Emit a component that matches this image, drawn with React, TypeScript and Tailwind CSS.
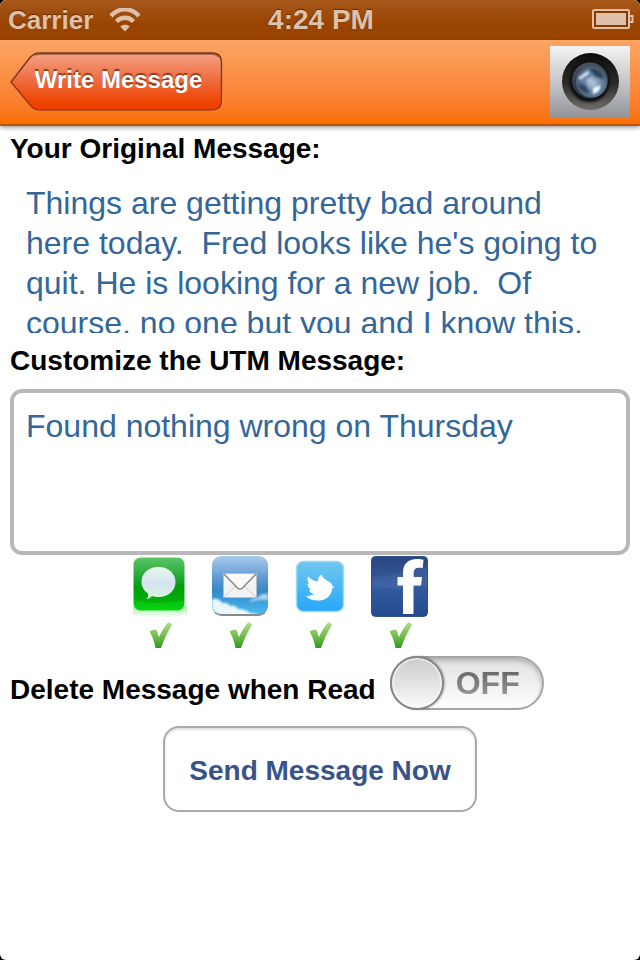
import { useState } from "react";
import type { ReactNode } from "react";

function StatusBar() {
  return (
    <div className="grid h-10 grid-cols-3 items-center bg-linear-to-b from-[#a7581a] via-[#994400] via-60% to-[#994400] pr-1.5 pl-2 text-[26px] leading-10 font-bold text-[#dfc0a8] [text-shadow:0_-1px_1px_#5c2900]">
      <div className="flex items-center gap-4">
        <span>Carrier</span>
        <svg width="32" height="24" viewBox="0 0 32 24" role="img" aria-label="Wi-Fi" fill="none" stroke="#dfc0a8">
          <path d="M2 8C10-.8 22-.8 30 8" strokeWidth="4.400" />
          <path d="M7.500 13.500c5-5 12-5 17 0" strokeWidth="4.400" />
          <path d="M16 23.500l-4.800-5c2.800-2.500 6.800-2.500 9.600 0z" fill="#dfc0a8" stroke="none" />
        </svg>
      </div>
      <span className="text-center text-[28px]">4:24 PM</span>
      <svg className="justify-self-end" width="42" height="22" viewBox="0 0 42 22" role="img" aria-label="Battery full">
        <rect x="1" y="1" width="36" height="18" rx="1.500" fill="#843900" stroke="#dfc0a8" strokeWidth="2" />
        <rect x="4" y="4" width="30" height="12" fill="#dfc0a8" />
        <path d="M38 7h2.500v6H38" fill="none" stroke="#dfc0a8" strokeWidth="2" />
      </svg>
    </div>
  );
}

function CameraIcon() {
  return (
    <svg className="block h-[72px] w-20" viewBox="0 0 80 72" aria-hidden="true">
      <defs>
        <linearGradient id="camPlate" x2="0" y2="1">
          <stop stopColor="#f4f4f4" />
          <stop offset=".5" stopColor="#c6c6ca" />
          <stop offset="1" stopColor="#909399" />
        </linearGradient>
        <linearGradient id="camRing" x2="0" y2="1">
          <stop stopColor="#0c0c0c" />
          <stop offset=".55" stopColor="#2e2c2b" />
          <stop offset="1" stopColor="#706d6a" />
        </linearGradient>
        <linearGradient id="camInner" x2="0" y2="1">
          <stop stopColor="#4b535d" />
          <stop offset="1" stopColor="#25303e" />
        </linearGradient>
        <radialGradient id="camGlass" cx=".55" cy=".55">
          <stop stopColor="#a8bfd6" />
          <stop offset=".5" stopColor="#6d89a7" />
          <stop offset="1" stopColor="#4a6480" />
        </radialGradient>
        <filter id="camSoft" x="-.3" y="-.3" width="1.600" height="1.600">
          <feGaussianBlur stdDeviation="1" />
        </filter>
      </defs>
      <rect width="80" height="72" fill="url(#camPlate)" />
      <circle cx="40.500" cy="35.500" r="28.500" fill="url(#camRing)" />
      <circle cx="39.500" cy="36" r="20" fill="#0b0d10" filter="url(#camSoft)" />
      <circle cx="40" cy="34.500" r="18" fill="url(#camInner)" />
      <circle cx="41.500" cy="36" r="15.500" fill="url(#camGlass)" />
      <g filter="url(#camSoft)">
        <path d="M40 23c8-1 13 4 14 10l-9-3z" fill="#2c4058" />
        <path d="M28 38l7 1 5 8c-7 0-11-3-12-9z" fill="#33475e" />
        <path d="M28 32l10-8 1 4-9 6z" fill="#cfe2f2" />
        <path d="M43 42l7-3c1 4-2 8-7 9z" fill="#f0f8ff" />
        <path d="M36 34l6-3 4 6-6 3z" fill="#a5bdd5" />
      </g>
    </svg>
  );
}

function NavBar() {
  return (
    <header className="relative flex h-[86px] items-center justify-between border-b-2 border-[#b9560b] bg-linear-to-b from-[#fca563] to-[#f97000] px-2.5 shadow-[0_2px_4px_rgba(0,0,0,0.35)]">
      <button type="button" className="relative h-[60px] w-[213px] pb-1 pl-1 text-2xl font-bold text-white [text-shadow:0_-2px_1px_rgba(90,25,0,0.65)]">
        <svg className="absolute inset-0" width="213" height="60" viewBox="0 0 213 60" aria-hidden="true">
          <defs>
            <linearGradient id="backFill" x2="0" y2="1">
              <stop stopColor="#f6a184" />
              <stop offset=".5" stopColor="#ee6a3c" />
              <stop offset=".85" stopColor="#ee4503" />
              <stop offset="1" stopColor="#f03e00" />
            </linearGradient>
            <linearGradient id="backEdge" x2="0" y2="1">
              <stop stopColor="#6e3a22" />
              <stop offset="1" stopColor="#a83308" />
            </linearGradient>
          </defs>
          <path d="M1 31L20 6q4-4.500 10-4.500h172q10 0 10 10v37q0 10-10 10H30q-6 0-10-5z" fill="none" stroke="#ffb067" />
          <path d="M1 30L20 5.500q4-4.500 10-4.500h172q9.500 0 9.500 10v37q0 10-9.500 10H30q-6 0-10-5z" fill="url(#backFill)" stroke="url(#backEdge)" strokeWidth="1.500" />
          <path d="M25 3q2-1 5-1h172q5 0 7 3" fill="none" stroke="#6b2c18" strokeOpacity=".5" strokeWidth="2" />
        </svg>
        <span className="relative">Write Message</span>
      </button>
      <button type="button" aria-label="Camera">
        <CameraIcon />
      </button>
    </header>
  );
}

function MessagesIcon() {
  return (
    <svg width="60" height="62" viewBox="0 0 60 62" aria-hidden="true">
      <defs>
        <linearGradient id="smsFill" x2="0" y2="1">
          <stop stopColor="#5dc46a" />
          <stop offset=".45" stopColor="#16a326" />
          <stop offset=".55" stopColor="#02a40b" />
          <stop offset="1" stopColor="#06d60f" />
        </linearGradient>
        <linearGradient id="smsGlow" x2="0" y2="1">
          <stop stopColor="#a9f0ad" />
          <stop offset="1" stopColor="#f3fff3" />
        </linearGradient>
        <linearGradient id="smsBubble" x2="0" y2="1">
          <stop stopColor="#e8fbea" />
          <stop offset=".5" stopColor="#d5e2f1" />
          <stop offset="1" stopColor="#d8f7dc" />
        </linearGradient>
      </defs>
      <path d="M3 50h54v9q-27 4-54 0z" fill="url(#smsGlow)" />
      <rect x="3.500" y="1.500" width="51" height="53" rx="7" fill="url(#smsFill)" />
      <path d="M4 30q25 8 50-4V44q-25 6-50 0z" fill="#008f08" opacity=".35" />
      <path d="M28.500 11c10 0 17 6.300 17 15s-7 15-17 15c-2.500 0-4.600-.3-6.500-1-1.500 2-3.500 3-5.500 3 1.500-1.700 2-3.500 1.500-5.500-4-2.800-6.500-6.500-6.500-11.500 0-8.700 7-15 17-15z" fill="url(#smsBubble)" />
    </svg>
  );
}

function MailIcon() {
  return (
    <svg width="60" height="62" viewBox="0 0 60 62" aria-hidden="true">
      <defs>
        <linearGradient id="mailSky" x2="0" y2="1">
          <stop stopColor="#a9cbec" />
          <stop offset=".4" stopColor="#5c98d0" />
          <stop offset=".6" stopColor="#3588c8" />
          <stop offset="1" stopColor="#48baf0" />
        </linearGradient>
        <clipPath id="mailClip">
          <rect x="2" y="0" width="56" height="58" rx="9" />
        </clipPath>
        <filter id="mailSoft">
          <feGaussianBlur stdDeviation="1" />
        </filter>
      </defs>
      <rect x="2.500" y="4" width="55" height="56" rx="9" fill="#858b90" />
      <g clipPath="url(#mailClip)">
        <rect x="2" y="0" width="56" height="58" fill="url(#mailSky)" />
        <g filter="url(#mailSoft)" fill="#eaf8fe">
          <path d="M2 43q7-1 10 4 5-1 8 3 5-2 8 3 7 0 12 4 6 0 10 3H2z" />
          <path d="M39 46q5-5 9-4 3-5 10-4v6q-9-1-19 2z" opacity=".65" />
        </g>
      </g>
      <rect x="13.500" y="17.500" width="33" height="24" fill="#f3f3f3" stroke="#b5bec8" />
      <path d="M14 41l12-11M46 41L34 30" stroke="#c9cdd1" fill="none" />
      <path d="M14 18l13.500 14q2.500 2 5 0L46 18" stroke="#85898e" strokeWidth="1.500" fill="#fafafa" />
    </svg>
  );
}

function TwitterIcon() {
  return (
    <svg width="60" height="62" viewBox="0 0 60 62" aria-hidden="true">
      <defs>
        <linearGradient id="twFill" x2="0" y2="1">
          <stop stopColor="#70c8ef" />
          <stop offset="1" stopColor="#26a6fb" />
        </linearGradient>
      </defs>
      <rect x="6.500" y="5.500" width="47" height="50" rx="7" fill="url(#twFill)" stroke="#9ed9f3" strokeWidth="1.500" />
      <path d="M18 20.500c3 3 6 4.500 10 5-.5-3 1-5.500 3.500-7 1 3 4 5.500 8 7.500 2 1 2.500 2.500 3 4l2 1-2.500 1.500c0 6-5 11.500-12 12-6 .5-11-1-14-4.500 3 0 6-.5 8-2-3-.5-4.500-2-5-4l2-.5c-2.500-1.500-3.500-3.500-3.500-6l2 .5c-2-2-2.500-5-1.500-7.500z" fill="#fff" />
    </svg>
  );
}

function FacebookIcon() {
  return (
    <svg width="60" height="62" viewBox="0 0 60 62" aria-hidden="true">
      <defs>
        <linearGradient id="fbFill" x2="0" y2="1">
          <stop stopColor="#294780" />
          <stop offset=".5" stopColor="#355b9f" />
          <stop offset="1" stopColor="#24498f" />
        </linearGradient>
      </defs>
      <rect x="1.500" y=".5" width="56" height="60" rx="4" fill="url(#fbFill)" stroke="#31518b" />
      <path d="M3 30q26 6 54-1V10q-28 8-54 12z" fill="#6e91c8" opacity=".17" />
      <path d="M33 58V29.500h-5.500V21H33v-4C33 8 38 3 47 3c2.500 0 5 .3 6.500.8l-.8 8.200c-6-1-9 .5-9 5v4H52l-1 8.500h-7.500V58z" fill="#fff" />
    </svg>
  );
}

function CheckMark() {
  return (
    <svg width="24" height="28" viewBox="0 0 24 28" aria-hidden="true">
      <defs>
        <linearGradient id="tickFill" x2="0" y2="1">
          <stop stopColor="#b5dd86" />
          <stop offset=".55" stopColor="#70bd4a" />
          <stop offset="1" stopColor="#2b9b20" />
        </linearGradient>
      </defs>
      <path d="M1.500 9.500q3.500-2.500 7-1.500l2.500 7Q15 6 20.500 0L24 2.500Q17 14 13 26H7.500Q6 17 1.500 9.500z" fill="url(#tickFill)" />
    </svg>
  );
}

const channels: { name: string; icon: ReactNode }[] = [
  { name: "Text message", icon: <MessagesIcon /> },
  { name: "Mail", icon: <MailIcon /> },
  { name: "Twitter", icon: <TwitterIcon /> },
  { name: "Facebook", icon: <FacebookIcon /> },
];

function ChannelToggle({ name, icon }: { name: string; icon: ReactNode }) {
  const [on, setOn] = useState(true);
  return (
    <button type="button" aria-label={name} aria-pressed={on} onClick={() => setOn(!on)} className="flex h-[94px] w-[60px] flex-col items-center gap-1">
      {icon}
      {on && <CheckMark />}
    </button>
  );
}

function DeleteSwitch() {
  const [on, setOn] = useState(false);
  return (
    <div className="flex h-[54px] items-center gap-3.5">
      <label htmlFor="delete-read" className="pt-3.5 text-[28px] leading-10 font-bold">
        Delete Message when Read
      </label>
      <span className="relative block h-[54px] w-[154px]">
        <input
          id="delete-read"
          type="checkbox"
          role="switch"
          checked={on}
          onChange={() => setOn(!on)}
          className="peer block size-full appearance-none rounded-full border-2 border-[#a5a5a5] bg-linear-to-b from-[#e2e2e2] via-[#efefef] via-50% to-white shadow-[inset_0_3px_5px_rgba(0,0,0,0.22)]"
        />
        <span className="pointer-events-none absolute top-0 left-0 size-[54px] rounded-full border-2 border-[#858585] bg-linear-to-b from-[#cccccc] to-[#fafafa] shadow-[inset_0_0_2px_1px_#ffffff,1px_0_2px_rgba(0,0,0,0.3)] peer-checked:left-[100px]" />
        <span className="pointer-events-none absolute inset-y-0 right-6 bg-linear-to-b from-[#6a6a6a] from-30% to-[#999999] to-75% bg-clip-text text-[32px] leading-[54px] font-bold text-transparent peer-checked:right-20">
          {on ? "ON" : "OFF"}
        </span>
      </span>
    </div>
  );
}

export default function App() {
  return (
    <div className="min-h-screen bg-black font-['Liberation_Sans',Arial,sans-serif] text-black">
      <div className="flex min-h-screen flex-col overflow-hidden rounded-md bg-white">
        <StatusBar />
        <NavBar />
        <main className="flex flex-col px-2.5 pt-[3px]">
          <label htmlFor="original" className="text-[28px] leading-10 font-bold">
            Your Original Message:
          </label>
          <textarea
            id="original"
            readOnly
            className="mt-1.5 block h-[158px] resize-none overflow-hidden px-4 pt-2 text-[32px] leading-10 text-[#336699] outline-none"
            defaultValue="Things are getting pretty bad around here today.  Fred looks like he's going to quit. He is looking for a new job.  Of course, no one but you and I know this."
          />
          <label htmlFor="custom" className="mt-2 text-[28px] leading-10 font-bold">
            Customize the UTM Message:
          </label>
          <textarea
            id="custom"
            className="mt-2 block h-[166px] resize-none overflow-hidden rounded-xl border-4 border-[#b8b8b8] px-3 pt-[13px] text-[32px] leading-10 text-[#336699] outline-none"
            defaultValue="Found nothing wrong on Thursday"
          />
          <div className="mt-px flex justify-center gap-5 pr-20">
            {channels.map((c) => (
              <ChannelToggle key={c.name} name={c.name} icon={c.icon} />
            ))}
          </div>
          <div className="mt-1.5">
            <DeleteSwitch />
          </div>
          <button
            type="button"
            className="mt-4 h-[86px] w-[314px] self-center rounded-2xl border-2 border-[#a9a9a9] bg-white pt-1 text-[28px] font-bold text-[#385487] shadow-[inset_0_2px_2px_rgba(0,0,0,0.12)]"
          >
            Send Message Now
          </button>
        </main>
      </div>
    </div>
  );
}
